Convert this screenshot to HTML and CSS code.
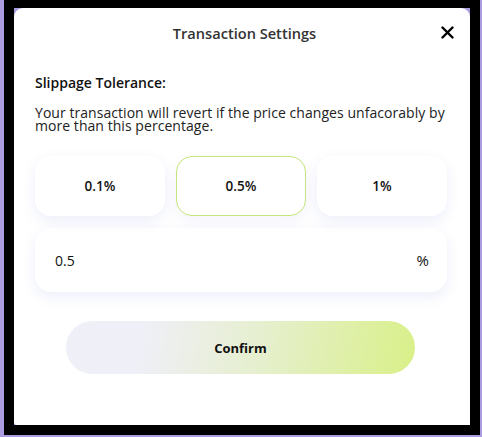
FILE: index.html
```html
<!DOCTYPE html>
<html>
<head>
<meta charset="utf-8">
<link rel="stylesheet" href="styles.css">
</head>
<body>
<div class="frame">
  <div class="card">
    <div class="header">
      <span></span>
      <h1 class="title">Transaction Settings</h1>
      <button class="close" aria-label="Close">
        <svg width="13" height="13" viewBox="0 0 13 13"><path d="M1.5 1.5 L11.5 11.5 M11.5 1.5 L1.5 11.5" stroke="#000" stroke-width="2.4" stroke-linecap="round"/></svg>
      </button>
    </div>
    <div class="body">
      <div class="label">Slippage Tolerance:</div>
      <p class="desc">Your transaction will revert if the price changes unfacorably by more than this percentage.</p>
      <div class="options">
        <button class="opt">0.1%</button>
        <button class="opt active">0.5%</button>
        <button class="opt">1%</button>
      </div>
      <div class="input-row">
        <span class="value">0.5</span>
        <span class="unit">%</span>
      </div>
      <div class="confirm-wrap">
        <button class="confirm">Confirm</button>
      </div>
    </div>
  </div>
</div>
</body>
</html>
```

FILE: styles.css
```css
* { box-sizing: border-box; }
html, body { margin: 0; padding: 0; }
body {
  background: #ab9ce2;
  width: 482px;
  height: 437px;
  overflow: hidden;
  font-family: "Open Sans", "Noto Sans", sans-serif;
  color: #1a1a1a;
  padding-left: 4px;
}
.frame {
  margin-top: -2px;
  width: 476px;
  height: 437px;
  border: 10px solid #000;
  background: #ab9ce2;
}
.card {
  background: #fff;
  height: 417px;
  border-radius: 9px 9px 0 3px;
}
.header {
  height: 48px;
  display: grid;
  grid-template-columns: 1fr auto 1fr;
  align-items: center;
  padding: 0 16px 0 21px;
}
.title {
  margin: 0;
  font-size: 14.6px;
  font-weight: 600;
  color: #333;
  line-height: 18px;
  padding-top: 2px;
}
.close {
  justify-self: end;
  background: none;
  border: 0;
  padding: 0;
  width: 13px;
  height: 13px;
  display: flex;
  margin-top: 1px;
}
.body {
  padding: 0 23px 0 21px;
}
.label {
  margin-top: 18px;
  font-size: 14px;
  font-weight: 600;
  line-height: 18px;
  color: #111;
}
.desc {
  margin: 14px 0 0;
  font-size: 14px;
  line-height: 13px;
  color: #222;
  letter-spacing: 0.05px;
}
.options {
  margin-top: 24px;
  display: grid;
  grid-template-columns: 130px 130px 130px;
  justify-content: space-between;
}
.opt {
  height: 60px;
  border: 1px solid transparent;
  background: #fff;
  border-radius: 16px;
  font-family: inherit;
  font-size: 13.5px;
  font-weight: 600;
  color: #111;
  box-shadow: 0 5px 14px rgba(110, 120, 210, 0.12);
}
.opt.active {
  border-color: #c3e57c;
  box-shadow: 0 5px 14px rgba(110, 120, 210, 0.08);
}
.input-row {
  margin-top: 12px;
  height: 64px;
  border-radius: 16px;
  background: #fff;
  box-shadow: 0 5px 14px rgba(110, 120, 210, 0.12);
  display: flex;
  align-items: center;
  justify-content: space-between;
  padding: 0 18px 0 20px;
  font-size: 14px;
  font-weight: 500;
  color: #111;
}
.unit { font-size: 15px; }
.confirm-wrap {
  margin-top: 29px;
  display: flex;
  padding-left: 31px;
}
.confirm {
  width: 349px;
  height: 53px;
  border: 0;
  border-radius: 27px;
  background: linear-gradient(100deg, #efeff7 22%, #e6efcf 55%, #d9f088 100%);
  font-family: inherit;
  font-size: 13px;
  font-weight: 700;
  color: #111;
}
```
